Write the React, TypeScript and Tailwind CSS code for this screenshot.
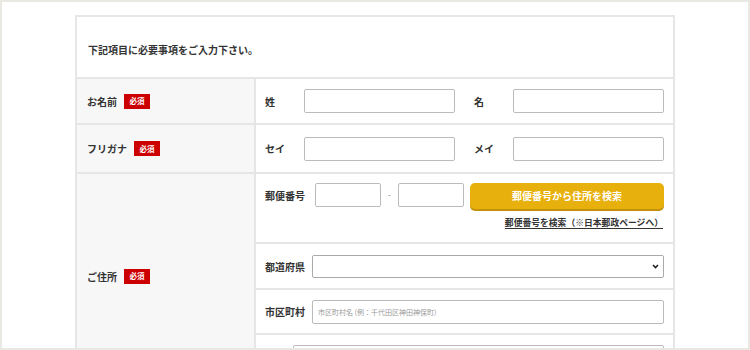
import React from 'react';

const line = 'border-[#e6e6e6]';

function Badge() {
  return (
    <span className="inline-flex items-center justify-center w-[26px] h-[15px] bg-[#cc0000] text-white text-[7.5px] font-bold leading-none">
      必須
    </span>
  );
}

function TextBox({ className = '', placeholder }: { className?: string; placeholder?: string }) {
  return (
    <input
      type="text"
      placeholder={placeholder}
      className={`h-[24px] bg-white border border-[#bbbbbb] rounded-[2px] px-[5px] text-[7px] placeholder:text-[#9a9a9a] outline-none ${className}`}
    />
  );
}

function LabelCell({ label }: { label: string }) {
  return (
    <div className={`w-[179px] shrink-0 bg-[#f7f7f7] border-r-2 ${line} flex items-center pl-[10px] gap-[7px]`}>
      <span className="text-[10px] font-bold text-[#333]">{label}</span>
      <Badge />
    </div>
  );
}

export default function App() {
  return (
    <div className="w-[750px] h-[350px] overflow-hidden bg-white border-2 border-[#e9e8e3] font-['Noto_Sans_CJK_JP',sans-serif] text-[#333]">
      <div className={`mt-[13px] ml-[73px] w-[600px] border-x-2 border-t-2 ${line}`}>
        {/* heading */}
        <div className={`h-[62px] border-b-2 ${line} flex items-center pl-[11px] pt-[5px]`}>
          <span className="text-[10px] font-bold">下記項目に必要事項をご入力下さい。</span>
        </div>

        {/* name */}
        <div className={`flex h-[46px] border-b-2 ${line}`}>
          <LabelCell label="お名前" />
          <div className="flex-1 flex items-center pl-[9px]">
            <span className="w-[39px] text-[10px] font-bold">姓</span>
            <TextBox className="w-[151px]" />
            <span className="ml-[19px] w-[39px] text-[10px] font-bold">名</span>
            <TextBox className="w-[151px]" />
          </div>
        </div>

        {/* kana */}
        <div className={`flex h-[49px] border-b-2 ${line}`}>
          <LabelCell label="フリガナ" />
          <div className="flex-1 flex items-center pl-[9px]">
            <span className="w-[39px] text-[10px] font-bold">セイ</span>
            <TextBox className="w-[151px]" />
            <span className="ml-[19px] w-[39px] text-[10px] font-bold">メイ</span>
            <TextBox className="w-[151px]" />
          </div>
        </div>

        {/* address */}
        <div className="flex">
          <LabelCell label="ご住所" />
          <div className="flex-1 flex flex-col">
            <div className={`h-[70px] border-b-2 ${line} pl-[9px] pr-[9px] pt-[9px]`}>
              <div className="flex items-start">
                <span className="w-[50px] h-[24px] flex items-center text-[10px] font-bold">郵便番号</span>
                <TextBox className="w-[66px]" />
                <span className="w-[17px] h-[24px] flex items-center justify-center text-[8px] text-[#777]">-</span>
                <TextBox className="w-[66px]" />
                <button className="ml-[6px] w-[194px] h-[26px] pb-[2px] rounded-[5px] bg-[#e8b00c] shadow-[0_2px_0_#c4920a] text-white text-[10px] font-bold flex items-center justify-center">
                  郵便番号から住所を検索
                </button>
              </div>
              <div className="flex justify-end mt-[10px] pr-[1px]">
                <a className="text-[8.8px] font-bold underline underline-offset-2 leading-none">郵便番号を検索（※日本郵政ページへ）</a>
              </div>
            </div>

            <div className={`h-[46px] border-b-2 ${line} pl-[9px] pr-[9px] flex items-center`}>
              <span className="w-[47px] text-[10px] font-bold">都道府県</span>
              <div className="relative w-[352px] h-[23px]">
                <select className="w-full h-full appearance-none bg-white border border-[#aaaaaa] rounded-[2px] outline-none"></select>
                <svg className="absolute right-[5px] top-[9px]" width="7" height="5" viewBox="0 0 7 5">
                  <path d="M1 1 L3.5 3.5 L6 1" fill="none" stroke="#222" strokeWidth="1.6" />
                </svg>
              </div>
            </div>

            <div className={`h-[45px] border-b-2 ${line} pl-[9px] pr-[9px] flex items-center`}>
              <span className="w-[47px] text-[10px] font-bold">市区町村</span>
              <TextBox className="w-[352px]" placeholder="市区町村名 (例：千代田区神田神保町)" />
            </div>

            <div className="h-[43px] pl-[9px] pr-[9px] pt-[10px] flex items-start">
              <span className="w-[28px] h-[24px]" />
              <TextBox className="w-[371px]" />
            </div>
          </div>
        </div>
      </div>
    </div>
  );
}
